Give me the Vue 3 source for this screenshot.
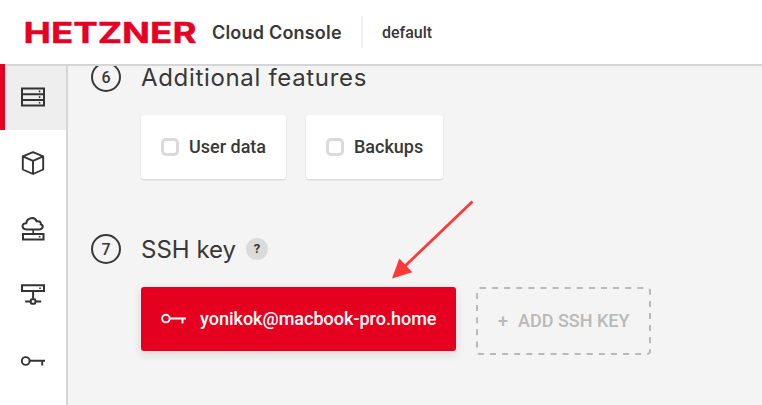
<script setup>
const navItems = ['servers', 'volumes', 'floating', 'networks', 'keys']
const features = [
  { label: 'User data', cls: 'user-data' },
  { label: 'Backups', cls: 'backups' },
]
</script>

<template>
  <div class="app">
    <header class="header">
      <svg class="logo" width="174" height="36" viewBox="0 0 174 36" role="img">
        <text x="-0.5" y="28.7" textLength="173" lengthAdjust="spacingAndGlyphs">HETZNER</text>
      </svg>
      <span class="product">Cloud Console</span>
      <span class="divider"></span>
      <span class="project">default</span>
    </header>

    <div class="body">
      <nav class="sidebar">
        <a v-for="(item, i) in navItems" :key="item" class="nav-item" :class="{ active: i === 0 }">
          <svg width="26" height="26" viewBox="0 0 26 26" fill="none" stroke="#333" stroke-width="2">
            <g v-if="item === 'servers'">
              <path d="M2 4.5h22v17H2zM2 10.2h22M2 16h22" />
              <path d="M18.8 7.4h1.5M18.8 13.1h1.5M18.8 18.8h1.5" stroke-width="1.6" />
            </g>
            <g v-else-if="item === 'volumes'" stroke-width="1.9" stroke-linejoin="round">
              <path d="M13 2.2l10.2 4.2v13.1L13 24 2.8 19.5V6.4zM2.8 6.4L13 10.8l10.2-4.4M13 10.8V24" />
            </g>
            <g v-else-if="item === 'floating'">
              <path d="M6.7 13.4C.9 13 1.6 6.7 6.3 7.2 7 1.2 14.9.4 16.7 5.3c3.3-.6 4.5 1.5 4.1 3 3.2 1.2 2.1 5.1-1.5 5.1z" />
              <path d="M13.2 13.4v4" stroke-width="1.6" />
              <path d="M3 18h20.5v5.4H3z" />
              <path d="M18.8 20.7h1.6" stroke-width="1.6" />
            </g>
            <g v-else-if="item === 'networks'">
              <path d="M2 3.3h22v5.8H2zM13.1 9.1v7.6M5.2 19.5h5.4M15.6 19.5h5.6" />
              <path d="M19.2 6.2h1.6" stroke-width="1.6" />
              <rect x="10.8" y="17.2" width="4.6" height="4.6" rx="1.2" />
            </g>
            <g v-else stroke-width="1.9">
              <circle cx="5.7" cy="13" r="3.9" />
              <path d="M9.6 12.8H25M22.2 12.8v4.8" />
            </g>
          </svg>
        </a>
      </nav>

      <main class="content">
        <section class="step">
          <span class="number">6</span>
          <div class="step-main">
            <h2 class="title-features">Additional features</h2>
            <div class="options">
              <label v-for="f in features" :key="f.label" class="card" :class="f.cls">
                <span class="checkbox"></span>
                <span class="card-label">{{ f.label }}</span>
              </label>
            </div>
          </div>
        </section>

        <section class="step">
          <span class="number">7</span>
          <div class="step-main">
            <div class="heading">
              <h2 class="title-ssh">SSH key</h2>
              <span class="help">?</span>
            </div>
            <div class="options">
              <button class="key-card">
                <svg width="26" height="14" viewBox="0 0 26 14" fill="none" stroke="#fff" stroke-width="1.9">
                  <circle cx="4.9" cy="6.6" r="3.8" />
                  <path d="M8.8 6.5H25M21.5 6.5v5" />
                </svg>
                <span class="card-label">yonikok@macbook-pro.home</span>
              </button>
              <button class="add-key">
                <svg class="dashes" width="175" height="68" fill="none">
                  <rect x="1" y="1" width="173" height="66" rx="3" />
                </svg>
                <span class="card-label">+</span>
                <span class="card-label">ADD SSH KEY</span>
              </button>
            </div>
          </div>
        </section>

        <svg class="arrow" width="84" height="82" viewBox="0 0 84 82">
          <path d="M80.5 2.5L12 68" stroke="#ff3838" stroke-width="2.8" />
          <path d="M0 79.5L7.3 59.5L20.3 73.2z" fill="#ff3838" />
        </svg>
      </main>
    </div>
  </div>
</template>

<style>
body { margin: 0; overflow: hidden; }
</style>

<style scoped>
.app {
  width: 762px;
  height: 405px;
  overflow: hidden;
  background: #f4f4f4;
  color: #383838;
  font-family: Roboto, sans-serif;
}
.header {
  box-sizing: border-box;
  height: 64px;
  padding-left: 24px;
  display: flex;
  align-items: center;
  background: #fff;
}
.logo { flex: none; }
.logo text {
  font: 700 28.5px Inter, sans-serif;
  fill: #e60023;
  stroke: #e60023;
  stroke-width: 0.4;
}
.product {
  width: 130px;
  margin-left: 14px;
  font: 600 18px Inter, sans-serif;
  letter-spacing: 0.2px;
  white-space: nowrap;
}
.divider { width: 2px; height: 32px; margin-left: 19px; background: #f0f0f0; }
.project { margin-left: 19px; font-size: 16px; font-weight: 500; }
.body { display: flex; height: 341px; box-shadow: inset 0 2px #d5d5d5; }
.sidebar {
  flex: none;
  width: 66px;
  border-right: 2px solid #d5d5d5;
  background: #fff;
  box-shadow: inset 0 2px #d5d5d5;
}
.nav-item {
  box-sizing: border-box;
  height: 66px;
  display: flex;
  align-items: center;
  justify-content: center;
}
.nav-item.active {
  border-left: 5px solid #e60023;
  padding-right: 5px;
  background: #eee;
  box-shadow: inset 0 2px #d5d5d5;
}
.content { position: relative; flex: 1; padding-left: 23px; }
.step { display: flex; height: 172px; }
.number {
  box-sizing: border-box;
  flex: none;
  width: 30px;
  height: 30px;
  margin-top: -2px;
  border: 2px solid #383838;
  border-radius: 50%;
  font-size: 16px;
  font-weight: 500;
  line-height: 27px;
  text-align: center;
}
.step:first-child .number { clip-path: inset(4px 0 0 0); }
.step-main { margin-left: 20px; }
h2 {
  margin: 0;
  font: 400 24px/26px Inter, sans-serif;
  white-space: nowrap;
}
.title-features { padding-top: 1px; margin-bottom: -1px; letter-spacing: 0.67px; }
.title-ssh { padding-top: 1px; margin-bottom: -1px; }
.heading { display: flex; align-items: center; height: 26px; }
.help {
  width: 22px;
  height: 22px;
  margin-left: 10px;
  border-radius: 50%;
  background: #dbdbdb;
  font-size: 13px;
  font-weight: 700;
  line-height: 22px;
  text-align: center;
}
.options { display: flex; align-items: flex-start; gap: 20px; margin-top: 25px; }
.card {
  box-sizing: border-box;
  height: 64px;
  padding-left: 20px;
  display: flex;
  align-items: center;
  gap: 10px;
  border-radius: 3px;
  background: #fff;
  box-shadow: 0 1px 2px rgba(0, 0, 0, 0.14);
  font-size: 18px;
  font-weight: 500;
}
.card-label { padding-bottom: 2px; }
.user-data { width: 145px; }
.backups { width: 137px; }
.checkbox {
  box-sizing: border-box;
  width: 18px;
  height: 18px;
  border: 3px solid #dadada;
  border-radius: 5px;
}
button { font-family: inherit; border: 0; text-align: left; }
.key-card {
  box-sizing: border-box;
  width: 315px;
  height: 64px;
  padding: 0 0 0 20px;
  display: flex;
  align-items: center;
  gap: 13px;
  border-radius: 3px;
  background: #e60020;
  box-shadow: 0 3px 10px rgba(0, 0, 0, 0.12);
  color: #fff;
  font-size: 18px;
  font-weight: 500;
}
.add-key {
  position: relative;
  box-sizing: border-box;
  width: 175px;
  height: 68px;
  padding: 0 0 0 22px;
  display: flex;
  align-items: center;
  gap: 10px;
  background: transparent;
  color: #b9b9b9;
  font-size: 18px;
  font-weight: 500;
}
.dashes { position: absolute; left: 0; top: 0; }
.dashes rect { stroke: #b9b9b9; stroke-width: 2; stroke-dasharray: 6 6.1; stroke-dashoffset: 0; }
.arrow { position: absolute; left: 324px; top: 135px; }
</style>
